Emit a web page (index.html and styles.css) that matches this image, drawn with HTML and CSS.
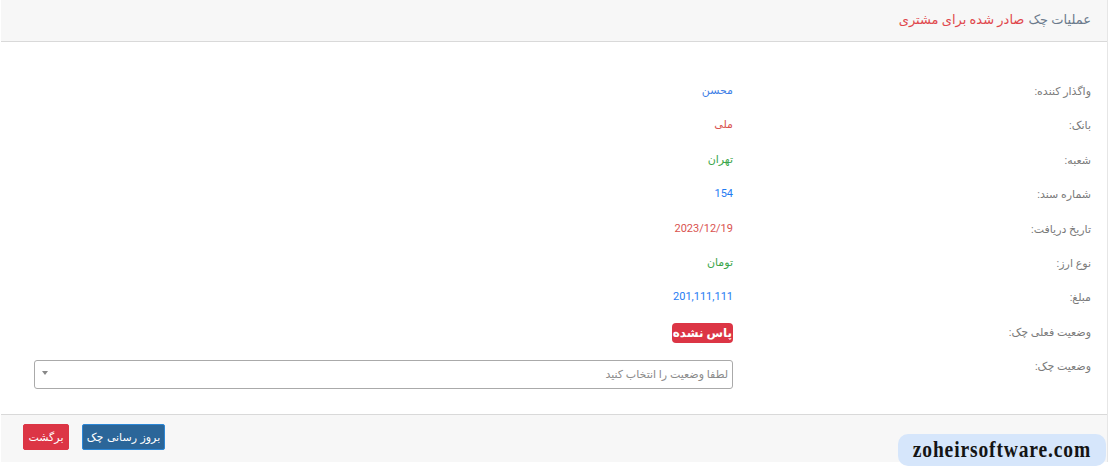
FILE: index.html
```html
<!DOCTYPE html>
<html lang="fa" dir="rtl">
<head>
<meta charset="utf-8">
<title>عملیات چک</title>
<link rel="stylesheet" href="styles.css">
</head>
<body>
<div class="card">
  <div class="card-header">
    <span class="t-gray">عملیات چک</span> <span class="t-red">صادر شده برای مشتری</span>
  </div>
  <div class="card-body">
    <div class="row"><div class="label">واگذار کننده:</div><div class="value blue2">محسن</div></div>
    <div class="row"><div class="label">بانک:</div><div class="value red">ملی</div></div>
    <div class="row"><div class="label">شعبه:</div><div class="value green">تهران</div></div>
    <div class="row"><div class="label">شماره سند:</div><div class="value blue">154</div></div>
    <div class="row"><div class="label">تاریخ دریافت:</div><div class="value red">2023/12/19</div></div>
    <div class="row"><div class="label">نوع ارز:</div><div class="value green">تومان</div></div>
    <div class="row"><div class="label">مبلغ:</div><div class="value blue">201,111,111</div></div>
    <div class="row"><div class="label">وضعیت فعلی چک:</div><div class="value"><span class="badge">پاس نشده</span></div></div>
    <div class="row row-select">
      <div class="label">وضعیت چک:</div>
      <div class="value">
        <div class="select">
          <span class="placeholder">لطفا وضعیت را انتخاب کنید</span>
          <span class="arrow"></span>
        </div>
      </div>
    </div>
  </div>
  <div class="card-footer">
    <button class="btn btn-blue">بروز رسانی چک</button>
    <button class="btn btn-red">برگشت</button>
  </div>
</div>
<div class="watermark"><span class="wm-text">zoheirsoftware.com</span></div>
</body>
</html>
```

FILE: styles.css
```css
html, body {
  margin: 0;
  padding: 0;
  background: #ffffff;
}
body {
  font-family: Roboto, "DejaVu Sans", sans-serif;
  width: 1108px;
  height: 466px;
  position: relative;
  overflow: hidden;
  direction: rtl;
}
.card {
  width: 1107px;
  border-right: 1px solid #e6e6e6;
  box-sizing: border-box;
}
.card-header {
  height: 42px;
  background: #f7f7f7;
  border-bottom: 1px solid #d9d9d9;
  box-sizing: border-box;
  padding: 0 16px 3px;
  display: flex;
  align-items: center;
  font-size: 13px;
}
.t-gray { color: #6b7a8c; }
.t-red { color: #e0474c; margin-right: 4px; }
.card-body {
  padding: 32px 16px 25px 33px;
}
.row {
  display: grid;
  grid-template-columns: 358px 1fr;
  height: 34.4px;
}
.label {
  font-size: 11px;
  color: #7a7a7a;
  padding-top: 10px;
  line-height: 16px;
}
.value {
  font-size: 11px;
  padding-top: 9px;
  line-height: 16px;
}
.blue { color: #1f7cf3; }
.blue2 { color: #3f7fe6; }
.red { color: #d9534f; }
.green { color: #3aa64a; }
.badge {
  display: inline-block;
  background: #dc3545;
  color: #ffffff;
  font-size: 12px;
  font-weight: bold;
  line-height: 20px;
  height: 20px;
  border-radius: 4px;
  padding: 0 1px;
  margin-top: -1px;
  white-space: nowrap;
}
.row-select {
  height: auto;
}
.row-select .value {
  padding-top: 11px;
}
.select {
  height: 29px;
  border: 1px solid #aaaaaa;
  border-radius: 3px;
  box-sizing: border-box;
  display: flex;
  align-items: center;
  justify-content: space-between;
  padding: 0 4px 0 7px;
}
.placeholder {
  font-size: 11px;
  color: #8a8a8a;
}
.arrow {
  width: 0;
  height: 0;
  border-left: 3px solid transparent;
  border-right: 3px solid transparent;
  border-top: 4px solid #888888;
  margin-bottom: 4px;
}
.card-footer {
  background: #f7f7f7;
  border-top: 1px solid #d9d9d9;
  padding: 9px 22px 12px;
  height: 48px;
  box-sizing: border-box;
  display: flex;
  direction: ltr;
  flex-direction: row-reverse;
  justify-content: flex-end;
  gap: 13px;
}
.btn {
  font-family: "DejaVu Sans", sans-serif;
  font-size: 11px;
  font-weight: normal;
  color: #ffffff;
  height: 26px;
  border-radius: 2px;
  padding: 0;
  cursor: pointer;
  direction: rtl;
  white-space: nowrap;
}
.btn-blue {
  background: #2b6699;
  border: 1px solid #2c87d6;
  width: 83px;
}
.btn-red {
  background: #dc3545;
  border: 1px solid #dc3545;
  width: 46px;
}
.watermark {
  position: absolute;
  left: 898px;
  top: 434px;
  width: 208px;
  height: 32px;
  background: #d6e6fb;
  border-radius: 10px;
  direction: ltr;
  display: flex;
  align-items: center;
  justify-content: center;
}
.wm-text {
  font-family: "Liberation Serif", serif;
  font-weight: bold;
  font-size: 23px;
  letter-spacing: 1px;
  color: #141414;
  display: inline-block;
  transform: scaleX(0.85);
  white-space: nowrap;
}
```
